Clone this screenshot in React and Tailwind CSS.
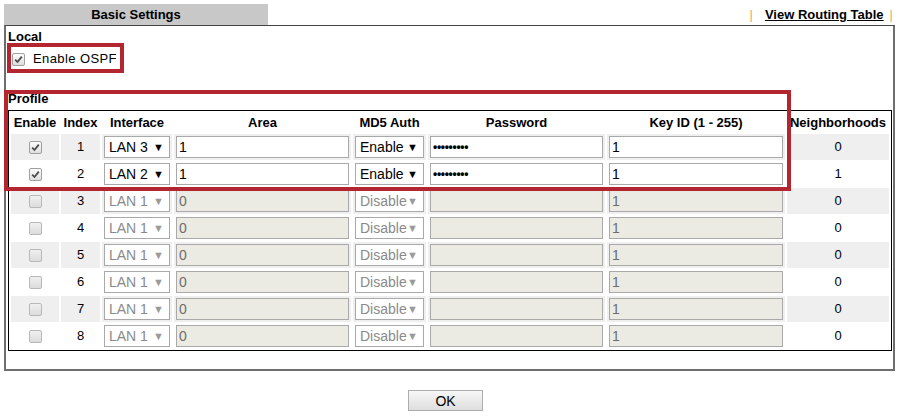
import React from 'react';

// OSPF basic settings page (router web UI)

const ROWS = [
  { on: true, iface: 'LAN 3', area: '1', md5: 'Enable', pw: true, key: '1', nb: '0' },
  { on: true, iface: 'LAN 2', area: '1', md5: 'Enable', pw: true, key: '1', nb: '1' },
  ...[3, 4, 5, 6, 7, 8].map(() => ({ on: false, iface: 'LAN 1', area: '0', md5: 'Disable', pw: false, key: '1', nb: '0' })),
];

function Check({ checked, disabled }) {
  return (
    <span
      className={
        'inline-flex items-center justify-center w-[13px] h-[13px] rounded-[2px] border align-middle ' +
        (disabled
          ? 'border-[#b8b8b8] bg-gradient-to-b from-[#f0f0f0] to-[#dcdcdc]'
          : 'border-[#a0a0a0] bg-gradient-to-b from-[#fcfcfc] to-[#dedede]')
      }
    >
      {checked && (
        <svg width="9" height="9" viewBox="0 0 9 9">
          <path d="M1.2 4.6 L3.5 7 L7.8 1.6" fill="none" stroke="#4a4a4a" strokeWidth="1.8" />
        </svg>
      )}
    </span>
  );
}

function Select({ value, disabled }) {
  return (
    <div
      className={
        'flex items-center justify-between h-[22px] w-full border border-[#a9a9a9] bg-white pl-[4px] pr-[5px] text-[14px] leading-none ' +
        (disabled ? 'text-[#8a8a8a]' : 'text-black')
      }
    >
      <span>{value}</span>
      <span className={'text-[11px] ' + (disabled ? 'text-[#9a9a9a]' : 'text-black')}>▼</span>
    </div>
  );
}

function Field({ value, disabled, dots }) {
  return (
    <div
      className={
        'flex items-center h-[22px] w-full border border-[#a9a9a9] px-[2px] leading-none ' +
        (disabled ? 'bg-[#ebebe4] text-[#6d6d6d]' : 'bg-white text-black')
      }
    >
      {dots ? <span className="text-[12px] font-bold tracking-[-0.3px]">•••••••••</span> : <span className="text-[14px]">{value}</span>}
    </div>
  );
}

export default function App() {
  return (
    <div className="relative w-[903px] h-[416px] bg-white text-black font-['Liberation_Sans',Arial,sans-serif]">
      {/* Tab + link */}
      <div className="flex items-end justify-between pl-[4px] pr-[10px] pt-[4px]">
        <div className="w-[264px] h-[21px] bg-[#c8c8c8] flex items-center justify-center text-[13px] font-bold">
          Basic Settings
        </div>
        <div className="flex items-center h-[21px] text-[13px] font-bold">
          <span className="text-[#f29f62] font-normal">|</span>
          <span className="ml-[12px] mr-[6px] underline">View Routing Table</span>
          <span className="text-[#f29f62] font-normal">|</span>
        </div>
      </div>

      {/* Main box */}
      <div className="mx-[4px] w-[891px] h-[346px] border-x-2 border-b-2 border-t border-[#6e6e6e] border-t-[#444]">
        <div className="pl-[2px] pt-[4px] text-[13px] font-bold leading-[13px]">Local</div>
        <div className="flex items-center pl-[6px] mt-[9px] h-[14px]">
          <Check checked />
          <span className="ml-[8px] text-[13px] tracking-[0.4px]">Enable OSPF</span>
        </div>
        <div className="pl-[2px] mt-[25px] text-[13px] font-bold leading-[15px]">Profile</div>
        <table className="ml-[2px] mt-[4px] w-[884px] table-fixed border border-black border-separate border-spacing-x-[2px] border-spacing-y-[1px]">
          <thead>
            <tr className="h-[21px] text-[13px] font-bold">
              <th className="w-[48px] p-0">Enable</th>
              <th className="w-[39px] p-0">Index</th>
              <th className="w-[70px] p-0">Interface</th>
              <th className="w-[177px] p-0">Area</th>
              <th className="w-[73px] p-0">MD5 Auth</th>
              <th className="w-[177px] p-0">Password</th>
              <th className="w-[178px] p-0">Key ID (1 - 255)</th>
              <th className="p-0">Neighborhoods</th>
            </tr>
          </thead>
          <tbody>
            {ROWS.map((r, i) => {
              const bg = i % 2 === 0 ? 'bg-[#efefef]' : 'bg-white';
              const td = 'h-[26px] p-0 px-[2px] ' + bg;
              return (
                <tr key={i}>
                  <td className={td + ' text-center'}>
                    <Check checked={r.on} disabled={!r.on} />
                  </td>
                  <td className={td + ' text-center text-[13px]'}>{i + 1}</td>
                  <td className={td}>
                    <Select value={r.iface} disabled={!r.on} />
                  </td>
                  <td className={td}>
                    <Field value={r.area} disabled={!r.on} />
                  </td>
                  <td className={td}>
                    <Select value={r.md5} disabled={!r.on} />
                  </td>
                  <td className={td}>
                    <Field dots={r.pw} disabled={!r.on} />
                  </td>
                  <td className={td}>
                    <Field value={r.key} disabled={!r.on} />
                  </td>
                  <td className={td + ' text-center text-[13px]'}>{r.nb}</td>
                </tr>
              );
            })}
          </tbody>
        </table>
      </div>

      {/* OK button */}
      <div className="w-[891px] flex justify-center mt-[19px]">
        <button className="w-[75px] h-[21px] border border-[#adadad] bg-gradient-to-b from-[#f7f7f7] to-[#dedede] text-[14px] leading-none">
          OK
        </button>
      </div>

      {/* highlight annotations */}
      <div className="absolute left-[7px] top-[43px] w-[117px] h-[30px] border-[4px] border-[#b3262f]" />
      <div className="absolute left-[4px] top-[90px] w-[787px] h-[101px] border-[4px] border-[#b3262f]" />
    </div>
  );
}
